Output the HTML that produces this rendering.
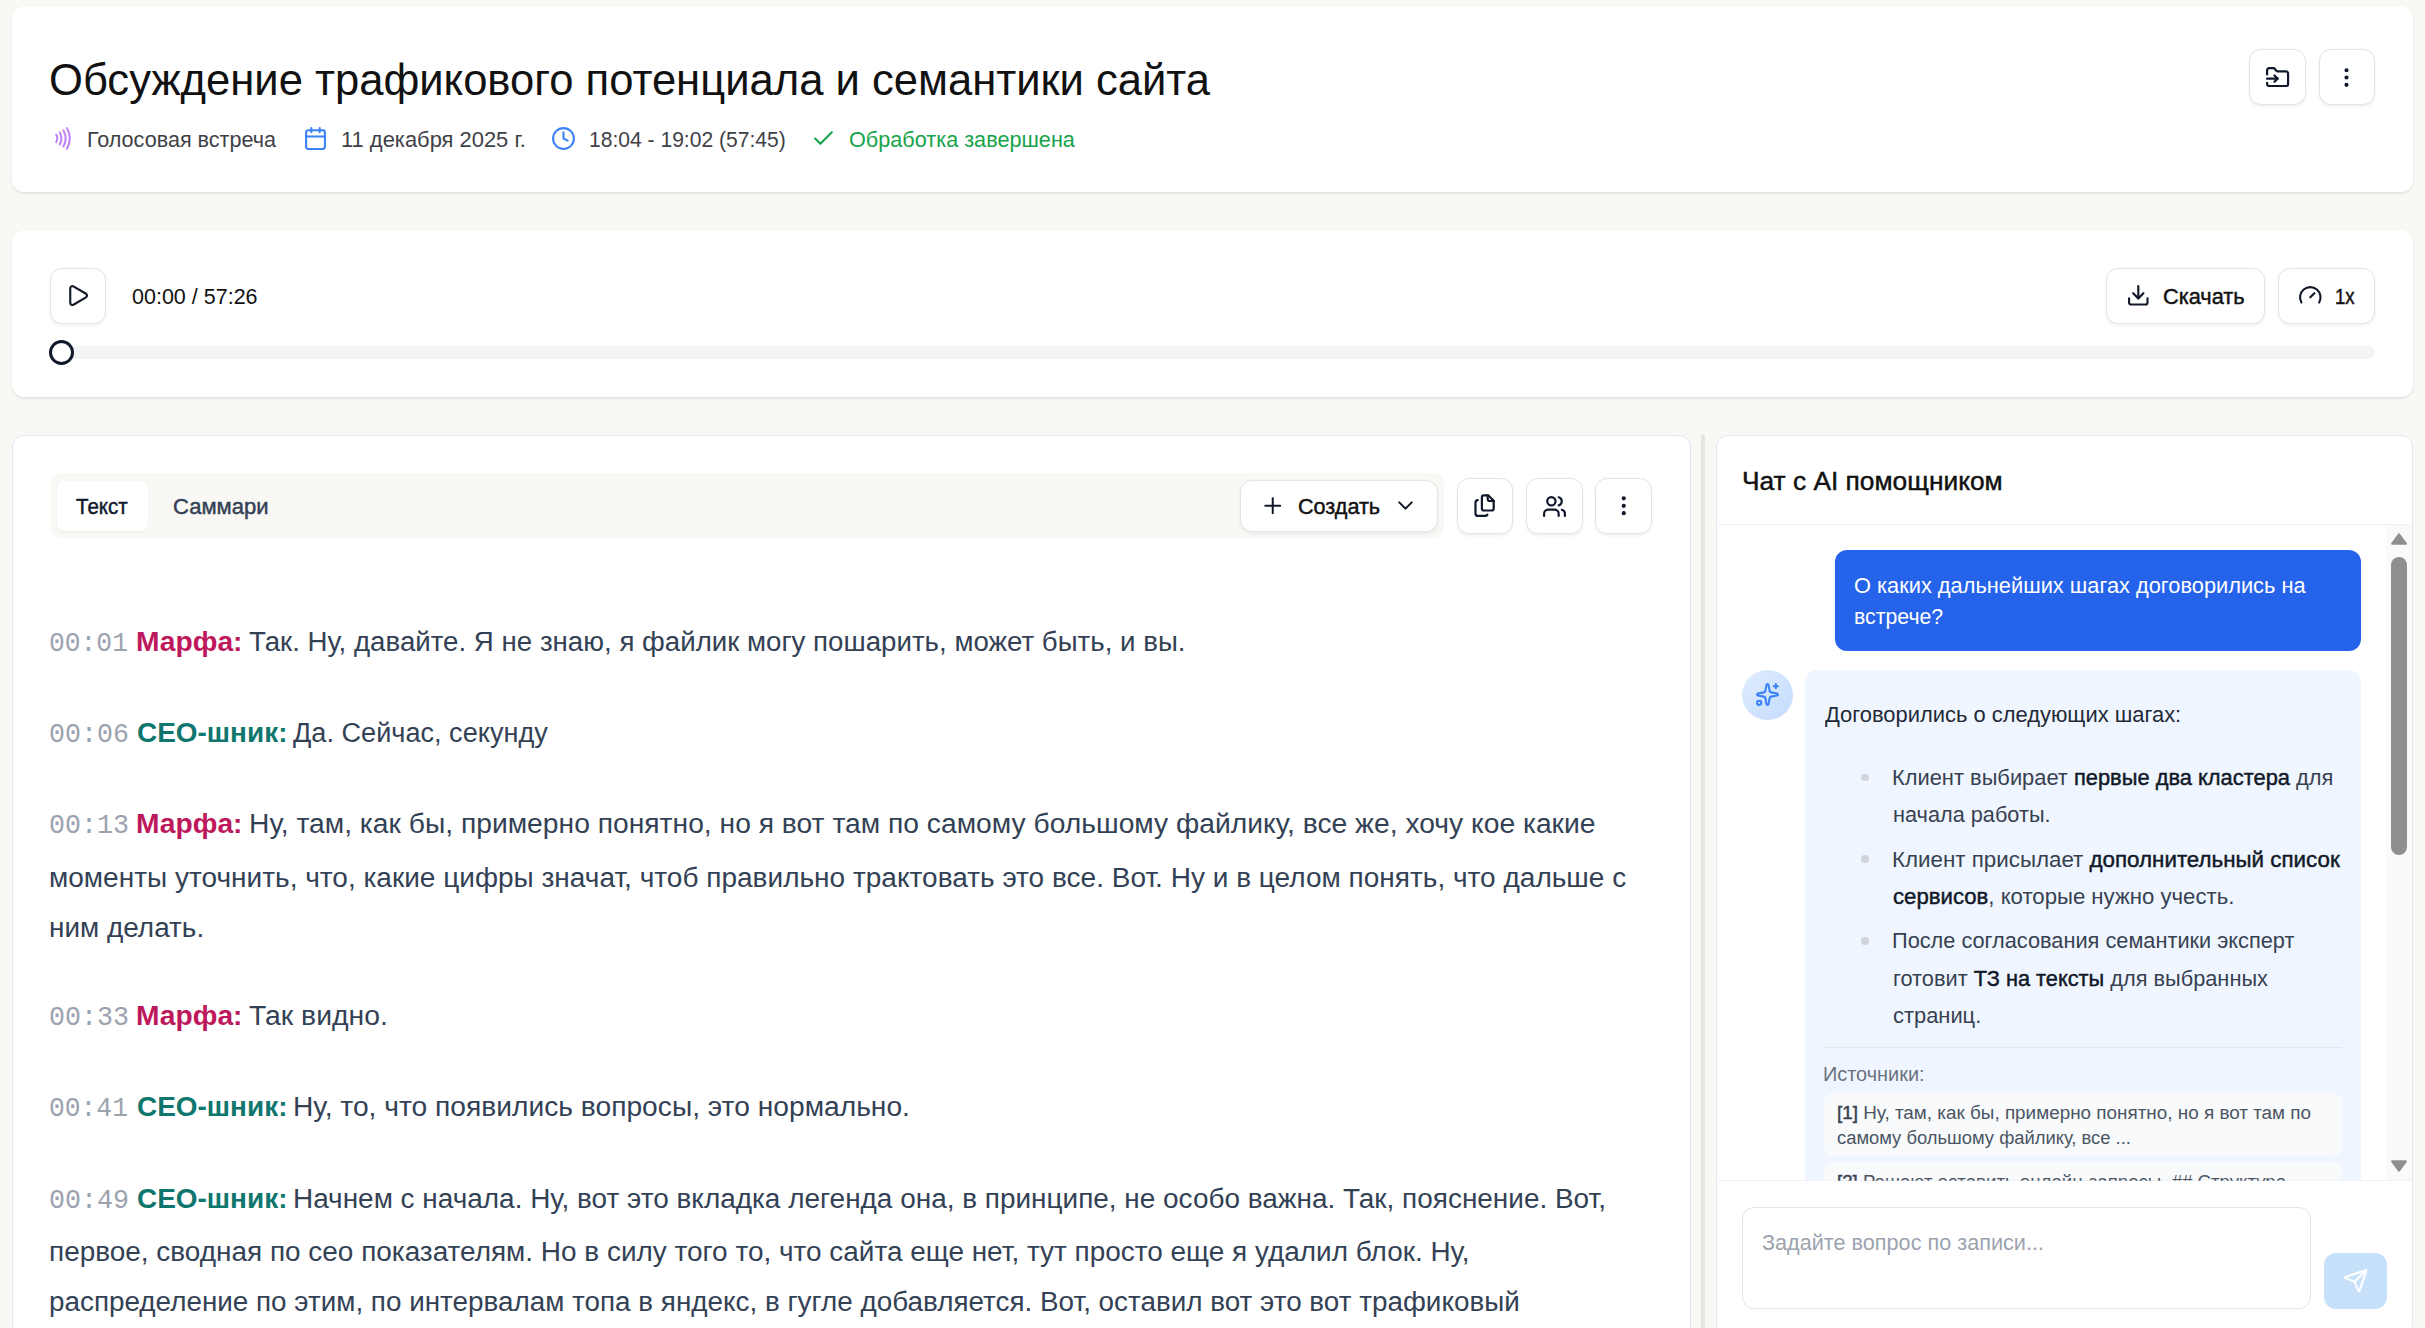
<!DOCTYPE html>
<html lang="ru"><head><meta charset="utf-8"><title>Обсуждение трафикового потенциала и семантики сайта</title>
<style>
html,body{margin:0;padding:0;width:2425px;height:1328px;overflow:hidden;background:#f9f8f5;font-family:"Liberation Sans",sans-serif}
.a{position:absolute;box-sizing:border-box}
.tx{position:absolute;white-space:nowrap;transform-origin:0 0}
.tx b{font-weight:700}
.tx b.sb{font-weight:400;-webkit-text-stroke:0.45px currentColor}
.card{position:absolute;box-sizing:border-box;background:#fff;border-radius:12px}
.btn{position:absolute;box-sizing:border-box;background:#fff;border:1.5px solid #e4e4e7;border-radius:12px;box-shadow:0 1.5px 3px rgba(0,0,0,.06)}
svg.i{position:absolute;fill:none;stroke-linecap:round;stroke-linejoin:round}
</style></head><body>
<!-- header card -->
<div class="card" style="left:12px;top:6px;width:2401px;height:186px;box-shadow:0 1.5px 3px rgba(0,0,0,.07),0 0.5px 1.5px rgba(0,0,0,.03)"></div>
<!-- header meta icons -->
<svg class="i" style="left:50.4px;top:126px;width:24.8px;height:24.8px" viewBox="0 0 24 24" stroke="#c084fc" stroke-width="2"><path d="M6 8.32a7.43 7.43 0 0 1 0 7.36"/><path d="M9.46 6.21a11.76 11.76 0 0 1 0 11.58"/><path d="M12.91 4.1a15.91 15.91 0 0 1 .01 15.8"/><path d="M16.37 2a20.16 20.16 0 0 1 0 20"/></svg>
<svg class="i" style="left:302.9px;top:126px;width:25px;height:25px" viewBox="0 0 24 24" stroke="#3b82f6" stroke-width="2"><path d="M8 2v4"/><path d="M16 2v4"/><rect width="18" height="18" x="3" y="4" rx="2"/><path d="M3 10h18"/></svg>
<svg class="i" style="left:551px;top:126px;width:25px;height:25px" viewBox="0 0 24 24" stroke="#3b82f6" stroke-width="2"><circle cx="12" cy="12" r="10"/><path d="M12 6v6l4 2"/></svg>
<svg class="i" style="left:810.8px;top:125.8px;width:25px;height:25px" viewBox="0 0 24 24" stroke="#16a34a" stroke-width="2"><path d="M20 6 9 17l-5-5"/></svg>
<!-- header buttons -->
<div class="btn" style="left:2248.8px;top:48.8px;width:57px;height:56px"></div>
<div class="btn" style="left:2318.8px;top:48.8px;width:56px;height:56px"></div>
<svg class="i" style="left:2265px;top:64.9px;width:25.2px;height:25.2px" viewBox="0 0 24 24" stroke="#0f172a" stroke-width="2.1"><path d="M2 9V5a2 2 0 0 1 2-2h3.9a2 2 0 0 1 1.69.9l.81 1.2a2 2 0 0 0 1.67.9H20a2 2 0 0 1 2 2v10a2 2 0 0 1-2 2H4a2 2 0 0 1-2-2v-1"/><path d="M2 13h10"/><path d="m9 16 3-3-3-3"/></svg>
<svg class="i" style="left:2334.2px;top:65px;width:25px;height:25px" viewBox="0 0 24 24" stroke="#0f172a" stroke-width="2"><circle cx="12" cy="12" r="1"/><circle cx="12" cy="5" r="1"/><circle cx="12" cy="19" r="1"/></svg>

<!-- player card -->
<div class="card" style="left:12px;top:230px;width:2401px;height:167px;box-shadow:0 1.5px 3px rgba(0,0,0,.07),0 0.5px 1.5px rgba(0,0,0,.03)"></div>
<div class="btn" style="left:49.8px;top:267.6px;width:56.4px;height:56.4px"></div>
<svg class="i" style="left:64.9px;top:282.8px;width:25.2px;height:25.2px" viewBox="0 0 24 24" stroke="#111827" stroke-width="2"><path d="M5 5a2 2 0 0 1 3.008-1.728l11.997 6.998a2 2 0 0 1 .003 3.458l-12 7A2 2 0 0 1 5 19z"/></svg>
<div class="btn" style="left:2105.8px;top:268px;width:159px;height:55.8px"></div>
<svg class="i" style="left:2125.9px;top:283px;width:24.6px;height:24.6px" viewBox="0 0 24 24" stroke="#111827" stroke-width="2.1"><path d="M12 15V3"/><path d="M21 15v4a2 2 0 0 1-2 2H5a2 2 0 0 1-2-2v-4"/><path d="m7 10 5 5 5-5"/></svg>
<div class="btn" style="left:2277.8px;top:268px;width:97px;height:55.8px"></div>
<svg class="i" style="left:2298px;top:283px;width:24.6px;height:24.6px" viewBox="0 0 24 24" stroke="#111827" stroke-width="2.1"><path d="m12 14 4-4"/><path d="M3.34 19a10 10 0 1 1 17.32 0"/></svg>
<div class="a" style="left:50px;top:346px;width:2325px;height:12.5px;border-radius:7px;background:#f3f4f6"></div>
<div class="a" style="left:49.2px;top:340px;width:25px;height:25px;border-radius:50%;border:3px solid #0f172a;background:#fff"></div>

<!-- main left card -->
<div class="card" style="left:12px;top:435px;width:1678.5px;height:1000px;border:1.5px solid #e2e8f0"></div>
<div class="a" style="left:51px;top:473px;width:1393px;height:65px;border-radius:11px;background:#f9f8f5"></div>
<div class="a" style="left:57px;top:481px;width:91px;height:50px;border-radius:7px;background:#fff;box-shadow:0 1px 2px rgba(0,0,0,.06)"></div>
<div class="btn" style="left:1239.6px;top:479.8px;width:198.6px;height:52.2px"></div>
<svg class="i" style="left:1260px;top:493px;width:25.5px;height:25.5px" viewBox="0 0 24 24" stroke="#111827" stroke-width="1.9"><path d="M5 12h14"/><path d="M12 5v14"/></svg>
<svg class="i" style="left:1393.2px;top:492.6px;width:25px;height:25px" viewBox="0 0 24 24" stroke="#111827" stroke-width="2"><path d="m6 9 6 6 6-6"/></svg>
<div class="btn" style="left:1456.8px;top:478px;width:56.2px;height:56.2px"></div>
<div class="btn" style="left:1525.8px;top:478px;width:57.1px;height:56.2px"></div>
<div class="btn" style="left:1594.9px;top:478px;width:57px;height:56.2px"></div>
<svg class="i" style="left:1468px;top:488px;width:32px;height:34px" viewBox="0 0 32 34" stroke="#0f172a" stroke-width="2.2"><path d="M13.9 9.3a2 2 0 0 1 2-2H20.2L25.7 12.8V20.5a2 2 0 0 1-2 2H15.9a2 2 0 0 1-2-2Z"/><path d="M19.7 7.5V11a2 2 0 0 0 2 2H25.5"/><path d="M9.7 12.1A2.5 2.5 0 0 0 7.5 14.6V25.4a2.5 2.5 0 0 0 2.5 2.5H17.2a2.5 2.5 0 0 0 2.2-1.3"/></svg>
<svg class="i" style="left:1542.2px;top:493.9px;width:25px;height:25px" viewBox="0 0 24 24" stroke="#0f172a" stroke-width="2.1"><path d="M16 21v-2a4 4 0 0 0-4-4H6a4 4 0 0 0-4 4v2"/><circle cx="9" cy="7" r="4"/><path d="M22 21v-2a4 4 0 0 0-3-3.87"/><path d="M16 3.13a4 4 0 0 1 0 7.75"/></svg>
<svg class="i" style="left:1610.7px;top:492.8px;width:25.5px;height:25.5px" viewBox="0 0 24 24" stroke="#0f172a" stroke-width="2"><circle cx="12" cy="12" r="1"/><circle cx="12" cy="5" r="1"/><circle cx="12" cy="19" r="1"/></svg>

<!-- divider -->
<div class="a" style="left:1701.3px;top:435px;width:4.2px;height:900px;background:#e5e5e5"></div>

<!-- chat card -->
<div class="card" style="left:1715.8px;top:435px;width:697.2px;height:902px;border:1.5px solid #e2e8f0;overflow:hidden">
</div>
<div class="a" style="left:1718px;top:523.5px;width:2412px;width:694px;height:1.5px;background:#eef1f5"></div>
<!-- scroll area -->
<div class="a" style="left:1718px;top:525px;width:694px;height:655px;overflow:hidden">
  <div class="a" style="left:117px;top:25px;width:526px;height:101px;border-radius:12px;background:#2563eb"></div>
  <div class="a" style="left:24px;top:145px;width:51px;height:50px;border-radius:50%;background:linear-gradient(135deg,#e0ecfe,#c3dcfd)"></div>
  <div class="a" style="left:87px;top:145px;width:556px;height:700px;border-radius:12px;background:#eff6ff"></div>
  <div class="a" style="left:143.25px;top:248.55px;width:7.5px;height:7.5px;border-radius:50%;background:#d1d5db"></div>
  <div class="a" style="left:143.25px;top:330.45px;width:7.5px;height:7.5px;border-radius:50%;background:#d1d5db"></div>
  <div class="a" style="left:143.25px;top:412.25px;width:7.5px;height:7.5px;border-radius:50%;background:#d1d5db"></div>
  <div class="a" style="left:106px;top:521.5px;width:518px;height:1.5px;background:#e5e7eb"></div>
  <div class="a" style="left:106px;top:568px;width:518px;height:62.6px;border-radius:9px;background:#f8fafc"></div>
  <div class="a" style="left:106px;top:637.4px;width:518px;height:62px;border-radius:9px;background:#f8fafc"></div>
  <!--CLIPTEXTS-->
  <div class="a" style="left:668px;top:0;width:26px;height:655px;background:#fafafa"></div>
  <div class="a" style="left:673px;top:32px;width:16px;height:298px;border-radius:8px;background:#8f8f8f"></div>
</div>
<svg class="a" style="left:2391px;top:533px;width:16px;height:12px" viewBox="0 0 16 12"><path d="M8 1.3 L14.8 10.7 L1.2 10.7 Z" fill="#8f8f8f" stroke="#8f8f8f" stroke-width="2.2" stroke-linejoin="round"/></svg>
<svg class="a" style="left:2391px;top:1160px;width:16px;height:12px" viewBox="0 0 16 12"><path d="M8 10.7 L14.8 1.3 L1.2 1.3 Z" fill="#8f8f8f" stroke="#8f8f8f" stroke-width="2.2" stroke-linejoin="round"/></svg>
<svg class="i" style="left:1755px;top:682px;width:25px;height:25px" viewBox="0 0 24 24" stroke="#3b82f6" stroke-width="2"><path d="M11.017 2.814a1 1 0 0 1 1.966 0l1.051 5.558a2 2 0 0 0 1.594 1.594l5.558 1.051a1 1 0 0 1 0 1.966l-5.558 1.051a2 2 0 0 0-1.594 1.594l-1.051 5.558a1 1 0 0 1-1.966 0l-1.051-5.558a2 2 0 0 0-1.594-1.594l-5.558-1.051a1 1 0 0 1 0-1.966l5.558-1.051a2 2 0 0 0 1.594-1.594z"/><path d="M20 2v4"/><path d="M22 4h-4"/><circle cx="4" cy="20" r="2"/></svg>
<div class="a" style="left:1718px;top:1179.5px;width:694px;height:1.5px;background:#eef1f5"></div>
<div class="a" style="left:1742px;top:1207px;width:569px;height:102px;border-radius:12px;border:1.5px solid #e2e5ea;background:#fff"></div>
<div class="a" style="left:2324px;top:1253px;width:63px;height:56px;border-radius:12px;background:#c8e1fb"></div>
<svg class="i" style="left:2343px;top:1268px;width:25.4px;height:25.4px" viewBox="0 0 24 24" stroke="#ffffff" stroke-width="2"><path d="M14.536 21.686a.5.5 0 0 0 .937-.024l6.5-19a.496.496 0 0 0-.635-.635l-19 6.5a.5.5 0 0 0-.024.937l7.93 3.18a2 2 0 0 1 1.112 1.11z"/><path d="m21.854 2.147-10.94 10.939"/></svg>
<div id="t0" class="tx" style="left:49.1px;top:56.91px;font:400 45px/45px 'Liberation Sans', sans-serif;color:#111111;transform:scaleX(0.9683);">Обсуждение трафикового потенциала и семантики сайта</div>
<div id="t1" class="tx" style="left:87.0px;top:128.75px;font:400 22.5px/22.5px 'Liberation Sans', sans-serif;color:#3f3f46;transform:scaleX(0.9595);">Голосовая встреча</div>
<div id="t2" class="tx" style="left:341.3px;top:128.75px;font:400 22.5px/22.5px 'Liberation Sans', sans-serif;color:#3f3f46;transform:scaleX(0.9742);">11 декабря 2025 г.</div>
<div id="t3" class="tx" style="left:589.1px;top:128.75px;font:400 22.5px/22.5px 'Liberation Sans', sans-serif;color:#3f3f46;transform:scaleX(0.9362);">18:04 - 19:02 (57:45)</div>
<div id="t4" class="tx" style="left:848.5px;top:128.75px;font:400 22.5px/22.5px 'Liberation Sans', sans-serif;color:#16a34a;transform:scaleX(0.9620);">Обработка завершена</div>
<div id="t5" class="tx" style="left:131.5px;top:285.75px;font:400 22.5px/22.5px 'Liberation Sans', sans-serif;color:#111111;transform:scaleX(0.9558);">00:00 / 57:26</div>
<div id="t6" class="tx" style="left:2163.4px;top:285.75px;font:400 22.5px/22.5px 'Liberation Sans', sans-serif;color:#111111;-webkit-text-stroke:0.45px currentColor;transform:scaleX(0.9675);">Скачать</div>
<div id="t7" class="tx" style="left:2335.2px;top:285.75px;font:400 22.5px/22.5px 'Liberation Sans', sans-serif;color:#111111;-webkit-text-stroke:0.45px currentColor;transform:scaleX(0.8261);">1x</div>
<div id="t8" class="tx" style="left:76.0px;top:495.75px;font:400 22.5px/22.5px 'Liberation Sans', sans-serif;color:#0f172a;-webkit-text-stroke:0.45px currentColor;transform:scaleX(0.9123);">Текст</div>
<div id="t9" class="tx" style="left:172.8px;top:495.75px;font:400 22.5px/22.5px 'Liberation Sans', sans-serif;color:#334155;-webkit-text-stroke:0.45px currentColor;transform:scaleX(0.9792);">Саммари</div>
<div id="t10" class="tx" style="left:1297.8px;top:495.75px;font:400 22.5px/22.5px 'Liberation Sans', sans-serif;color:#111111;-webkit-text-stroke:0.45px currentColor;transform:scaleX(0.9595);">Создать</div>
<div id="t11" class="tx" style="left:49.1px;top:631.39px;font:400 27px/27px 'Liberation Mono', monospace;color:#9ca3af;transform:scaleX(0.9744);">00:01</div>
<div id="t12" class="tx" style="left:135.6px;top:629.24px;font:700 27px/27px 'Liberation Sans', sans-serif;color:#be185d;transform:scaleX(1.0439);">Марфа:</div>
<div id="t13" class="tx" style="left:249.0px;top:629.24px;font:400 27px/27px 'Liberation Sans', sans-serif;color:#334155;transform:scaleX(1.0249);">Так. Ну, давайте. Я не знаю, я файлик могу пошарить, может быть, и вы.</div>
<div id="t14" class="tx" style="left:49.0px;top:722.39px;font:400 27px/27px 'Liberation Mono', monospace;color:#9ca3af;transform:scaleX(0.9870);">00:06</div>
<div id="t15" class="tx" style="left:136.5px;top:720.24px;font:700 27px/27px 'Liberation Sans', sans-serif;color:#0f766e;transform:scaleX(1.0345);">СЕО-шник:</div>
<div id="t16" class="tx" style="left:293.0px;top:720.24px;font:400 27px/27px 'Liberation Sans', sans-serif;color:#334155;transform:scaleX(1.0039);">Да. Сейчас, секунду</div>
<div id="t17" class="tx" style="left:49.0px;top:813.39px;font:400 27px/27px 'Liberation Mono', monospace;color:#9ca3af;transform:scaleX(0.9870);">00:13</div>
<div id="t18" class="tx" style="left:135.6px;top:811.24px;font:700 27px/27px 'Liberation Sans', sans-serif;color:#be185d;transform:scaleX(1.0439);">Марфа:</div>
<div id="t19" class="tx" style="left:249.2px;top:811.24px;font:400 27px/27px 'Liberation Sans', sans-serif;color:#334155;transform:scaleX(1.0462);">Ну, там, как бы, примерно понятно, но я вот там по самому большому файлику, все же, хочу кое какие</div>
<div id="t20" class="tx" style="left:48.9px;top:864.64px;font:400 27px/27px 'Liberation Sans', sans-serif;color:#334155;transform:scaleX(1.0380);">моменты уточнить, что, какие цифры значат, чтоб правильно трактовать это все. Вот. Ну и в целом понять, что дальше с</div>
<div id="t21" class="tx" style="left:48.9px;top:914.94px;font:400 27px/27px 'Liberation Sans', sans-serif;color:#334155;transform:scaleX(1.0342);">ним делать.</div>
<div id="t22" class="tx" style="left:49.0px;top:1004.89px;font:400 27px/27px 'Liberation Mono', monospace;color:#9ca3af;transform:scaleX(0.9870);">00:33</div>
<div id="t23" class="tx" style="left:135.6px;top:1002.74px;font:700 27px/27px 'Liberation Sans', sans-serif;color:#be185d;transform:scaleX(1.0439);">Марфа:</div>
<div id="t24" class="tx" style="left:249.0px;top:1002.74px;font:400 27px/27px 'Liberation Sans', sans-serif;color:#334155;transform:scaleX(1.0496);">Так видно.</div>
<div id="t25" class="tx" style="left:49.1px;top:1096.29px;font:400 27px/27px 'Liberation Mono', monospace;color:#9ca3af;transform:scaleX(0.9744);">00:41</div>
<div id="t26" class="tx" style="left:136.5px;top:1094.14px;font:700 27px/27px 'Liberation Sans', sans-serif;color:#0f766e;transform:scaleX(1.0345);">СЕО-шник:</div>
<div id="t27" class="tx" style="left:293.1px;top:1094.14px;font:400 27px/27px 'Liberation Sans', sans-serif;color:#334155;transform:scaleX(1.0443);">Ну, то, что появились вопросы, это нормально.</div>
<div id="t28" class="tx" style="left:49.0px;top:1188.39px;font:400 27px/27px 'Liberation Mono', monospace;color:#9ca3af;transform:scaleX(0.9870);">00:49</div>
<div id="t29" class="tx" style="left:136.5px;top:1186.24px;font:700 27px/27px 'Liberation Sans', sans-serif;color:#0f766e;transform:scaleX(1.0345);">СЕО-шник:</div>
<div id="t30" class="tx" style="left:293.1px;top:1186.24px;font:400 27px/27px 'Liberation Sans', sans-serif;color:#334155;transform:scaleX(1.0349);">Начнем с начала. Ну, вот это вкладка легенда она, в принципе, не особо важна. Так, пояснение. Вот,</div>
<div id="t31" class="tx" style="left:48.9px;top:1239.24px;font:400 27px/27px 'Liberation Sans', sans-serif;color:#334155;transform:scaleX(1.0347);">первое, сводная по сео показателям. Но в силу того то, что сайта еще нет, тут просто еще я удалил блок. Ну,</div>
<div id="t32" class="tx" style="left:48.9px;top:1289.24px;font:400 27px/27px 'Liberation Sans', sans-serif;color:#334155;transform:scaleX(1.0313);">распределение по этим, по интервалам топа в яндекс, в гугле добавляется. Вот, оставил вот это вот трафиковый</div>
<div id="t33" class="tx" style="left:1741.6px;top:469.41px;font:400 25.5px/25.5px 'Liberation Sans', sans-serif;color:#111111;-webkit-text-stroke:0.45px currentColor;transform:scaleX(1.0321);">Чат с AI помощником</div>
<div id="t34" class="tx" style="left:1853.6px;top:574.95px;font:400 22.5px/22.5px 'Liberation Sans', sans-serif;color:#ffffff;transform:scaleX(0.9692);">О каких дальнейших шагах договорились на</div>
<div id="t35" class="tx" style="left:1853.7px;top:605.85px;font:400 22.5px/22.5px 'Liberation Sans', sans-serif;color:#ffffff;transform:scaleX(0.9452);">встрече?</div>
<div id="t36" class="tx" style="left:1824.5px;top:703.75px;font:400 22.5px/22.5px 'Liberation Sans', sans-serif;color:#1f2937;transform:scaleX(0.9739);">Договорились о следующих шагах:</div>
<div id="t37" class="tx" style="left:1892.3px;top:766.75px;font:400 22.5px/22.5px 'Liberation Sans', sans-serif;color:#374151;transform:scaleX(0.9718);">Клиент выбирает <b class="sb" style="color:#111827">первые два кластера</b> для</div>
<div id="t38" class="tx" style="left:1893.2px;top:804.45px;font:400 22.5px/22.5px 'Liberation Sans', sans-serif;color:#374151;transform:scaleX(0.9650);">начала работы.</div>
<div id="t39" class="tx" style="left:1892.2px;top:848.55px;font:400 22.5px/22.5px 'Liberation Sans', sans-serif;color:#374151;transform:scaleX(0.9929);">Клиент присылает <b class="sb" style="color:#111827">дополнительный список</b></div>
<div id="t40" class="tx" style="left:1893.2px;top:885.75px;font:400 22.5px/22.5px 'Liberation Sans', sans-serif;color:#374151;transform:scaleX(0.9849);"><b class="sb" style="color:#111827">сервисов</b>, которые нужно учесть.</div>
<div id="t41" class="tx" style="left:1892.3px;top:930.45px;font:400 22.5px/22.5px 'Liberation Sans', sans-serif;color:#374151;transform:scaleX(0.9664);">После согласования семантики эксперт</div>
<div id="t42" class="tx" style="left:1893.2px;top:967.55px;font:400 22.5px/22.5px 'Liberation Sans', sans-serif;color:#374151;transform:scaleX(0.9674);">готовит <b class="sb" style="color:#111827">ТЗ на тексты</b> для выбранных</div>
<div id="t43" class="tx" style="left:1893.2px;top:1005.15px;font:400 22.5px/22.5px 'Liberation Sans', sans-serif;color:#374151;transform:scaleX(0.9727);">страниц.</div>
<div id="t44" class="tx" style="left:1822.7px;top:1064.99px;font:400 19.5px/19.5px 'Liberation Sans', sans-serif;color:#6b7280;transform:scaleX(1.0198);">Источники:</div>
<div id="t45" class="tx" style="left:1836.7px;top:1104.06px;font:400 18px/18px 'Liberation Sans', sans-serif;color:#4b5563;transform:scaleX(1.0489);"><b class="sb" style="color:#374151">[1]</b> Ну, там, как бы, примерно понятно, но я вот там по</div>
<div id="t46" class="tx" style="left:1836.7px;top:1128.76px;font:400 18px/18px 'Liberation Sans', sans-serif;color:#4b5563;transform:scaleX(1.0210);">самому большому файлику, все ...</div>
<div id="t47" class="tx" style="left:1836.7px;top:1173.46px;font:400 18px/18px 'Liberation Sans', sans-serif;color:#4b5563;transform:scaleX(1.0368);clip-path:inset(0 0 10.6px 0);"><b class="sb" style="color:#374151">[2]</b> Решают оставить онлайн-запросы. ## Структура</div>
<div id="t48" class="tx" style="left:1761.7px;top:1232.45px;font:400 22.5px/22.5px 'Liberation Sans', sans-serif;color:#9ca3af;transform:scaleX(0.9617);">Задайте вопрос по записи...</div>
</body></html>
